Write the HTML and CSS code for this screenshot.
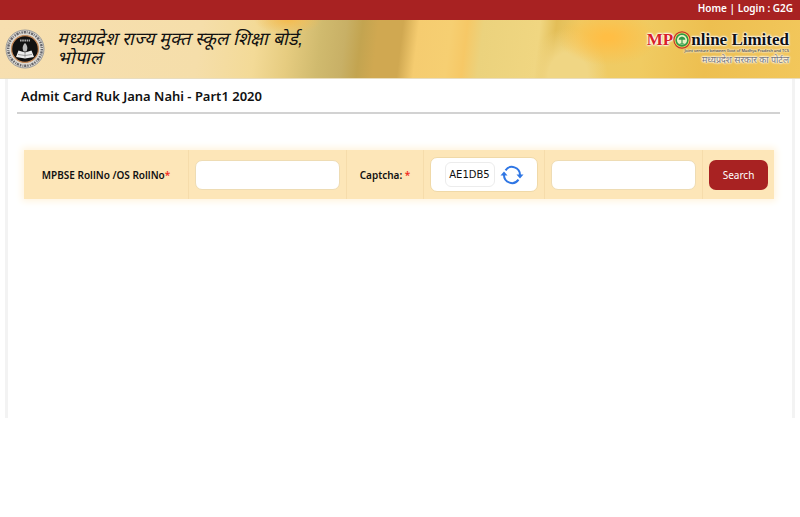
FILE: index.html
```html
<!DOCTYPE html>
<html lang="en">
<head>
    <meta charset="UTF-8">
    <meta name="viewport" content="width=device-width, initial-scale=1">
    <title>Admit Card Ruk Jana Nahi</title>
    <link rel="stylesheet" href="styles.css">
</head>
<body>
    <nav class="top-bar">
        <a href="#">Home</a> | <a href="#">Login : G2G</a>
    </nav>
    <header class="banner">
        <svg class="board-logo" viewBox="0 0 40 40" aria-hidden="true">
            <circle cx="20" cy="20" r="19" fill="#dcd9d2" stroke="#999" stroke-width="1"/>
            <circle cx="20" cy="20" r="16.8" fill="none" stroke="#66666c" stroke-width="2.4" stroke-dasharray="1.4 1 2.2 .9 .8 1.2"/>
            <circle cx="20" cy="20" r="13.4" fill="#111" stroke="#c78a58" stroke-width="1.2"/>
            <path d="M15 11.500h10" stroke="#aaa" stroke-width="1.800" stroke-dasharray="1.6 .6"/>
            <path d="M20 14c3 3 2.600 6 1.500 8.500h-3c-1.100-2.500-1.500-5.500 1.500-8.500z" fill="#bbb"/>
            <path d="M11 28l2.500-6.500 6.500 2 6.500-2 2.500 6.500-9 1.500z" fill="#eee"/>
            <path d="M13 25.500l7 1 7-1M20 23.500v5" fill="none" stroke="#888" stroke-width=".8"/>
        </svg>
        <h1 class="board-name" lang="hi">मध्यप्रदेश राज्य मुक्त स्कूल शिक्षा बोर्ड, भोपाल</h1>
        <div class="portal">
            <div class="portal-name">
                <span class="mp">MP</span>
                <svg class="portal-icon" viewBox="0 0 16 16" aria-hidden="true">
                    <circle cx="8" cy="8" r="7.2" fill="#f6d95c" stroke="#c4342c" stroke-width="1"/>
                    <circle cx="8" cy="8" r="5.200" fill="#e9f3c4" stroke="#2f9a48" stroke-width="1.400"/>
                    <path d="M8 5v6.500M6 11.500h4" stroke="#2f9a48" stroke-width="1"/>
                    <path d="M5 7.800c0-3.600 6-3.600 6 0z" fill="#2f9a48"/>
                </svg>
                <span>nline Limited</span>
            </div>
            <div class="portal-note">Joint venture between Govt of Madhya Pradesh and TCS</div>
            <div class="portal-hindi" lang="hi">मध्यप्रदेश सरकार का पोर्टल</div>
        </div>
    </header>
    <main class="content">
        <h2 class="page-title">Admit Card Ruk Jana Nahi - Part1 2020</h2>
        <form class="search-form">
            <div class="cell label-cell">
                <label for="rollNo">MPBSE RollNo /OS RollNo<span class="required">*</span></label>
            </div>
            <div class="cell">
                <input type="text" id="rollNo" name="rollNo">
            </div>
            <div class="cell label-cell">
                <label for="captcha">Captcha: <span class="required">*</span></label>
            </div>
            <div class="cell">
                <div class="captcha-box">
                    <span class="captcha-code">AE1DB5</span>
                    <button type="button" class="refresh" aria-label="Refresh captcha">
                        <svg viewBox="0 0 24 20" aria-hidden="true">
                            <g fill="none" stroke="#2f76e4" stroke-width="2">
                                <path d="M5.500 5.300A8 8 0 0 1 20 10"/>
                                <path d="M18.500 14.700A8 8 0 0 1 4 10"/>
                            </g>
                            <path d="M16.500 9.500h7l-3.500 4zM.5 10.500h7L4 6.500z" fill="#2f76e4"/>
                        </svg>
                    </button>
                </div>
            </div>
            <div class="cell">
                <input type="text" id="captcha" name="captcha">
            </div>
            <div class="cell">
                <button type="submit" class="search-button">Search</button>
            </div>
        </form>
    </main>
</body>
</html>
```

FILE: styles.css
```css
* {
    box-sizing: border-box;
}
body {
    margin: 0;
    background-color: #fff;
    color: #111;
    font-family: "Noto Sans", sans-serif;
}
.top-bar {
    height: 20px;
    padding-right: 7px;
    background-color: #a82222;
    color: #fff;
    font-size: 10px;
    font-weight: 600;
    line-height: 16px;
    text-align: right;
}
.top-bar a {
    color: #fff;
    text-decoration: none;
}
.banner {
    display: flex;
    align-items: center;
    height: 59px;
    padding: 0 11px 0 5px;
    border-bottom: 1px solid #e8ddc0;
    background:
        radial-gradient(ellipse 50px 28px at 76% 30%, #ffbe45 10%, transparent),
        radial-gradient(ellipse 40px 50px at 71% 100%, #f0d684 50%, transparent),
        radial-gradient(ellipse 34px 14px at 36% 0, #f3bd55 10%, transparent),
        linear-gradient(97deg, #f7dfb0 0, #f5deaa 25%, #f3da97 32%, #e6cc80 36%, #d0ba6e 40%, #c8b066 43%, #c3a450 45%, #d0a851 47%, #d0a851 50%, #f5cc70 52%, #f6cf72 56%, #f6c866 58%, #ebd27d 60%, #f0d681 67%, #e3be58 69%, #eecb66 72%, #f0cb62 80%, #edbf50 88%, #f2c75b 100%);
}
.board-logo {
    flex: none;
    width: 40px;
    height: 40px;
}
.board-name {
    width: 270px;
    margin: 0 auto 0 12px;
    font-family: sans-serif;
    font-size: 18px;
    font-style: italic;
    font-weight: 500;
    line-height: 19px;
}
.portal {
    text-align: right;
    text-shadow: 0 0 2px #fff, 0 0 2px #fff, 0 0 2px #fff, 0 0 3px #fff;
}
.portal-name {
    display: flex;
    align-items: center;
    font-family: "Liberation Serif", serif;
    font-size: 17px;
    font-weight: bold;
    line-height: 16px;
}
.mp {
    color: #d81f2a;
}
.portal-icon {
    width: 18px;
    height: 18px;
}
.portal-note {
    font-size: 4px;
    line-height: 4px;
}
.portal-hindi {
    color: #77767c;
    font-size: 9px;
    line-height: 14px;
}
.content {
    min-height: 339px;
    margin: 0 5px;
    padding: 8px 12px;
    border: solid #f3f3f3;
    border-width: 0 3px;
}
.page-title {
    margin: 0 0 36px -3px;
    padding: 0 0 7px 4px;
    border-bottom: 2px solid #d2d2d2;
    font-size: 13px;
    font-weight: 600;
    line-height: 18px;
}
.search-form {
    display: grid;
    grid-template-columns: 165fr 158fr 77fr 121fr 158fr 71fr;
    margin: 0 6px 0 4px;
    background-color: #fde6b8;
    box-shadow: 0 0 7px 2px #fff3dc;
}
.cell {
    display: flex;
    align-items: center;
    min-width: 0;
    height: 49px;
    padding: 0 6px;
    border-right: 1px solid #f6dcab;
}
.cell:last-child {
    border-right: none;
}
.label-cell {
    justify-content: center;
    font-size: 10px;
    font-weight: 600;
    white-space: nowrap;
}
.required {
    color: #f22c1e;
}
.cell input {
    width: 100%;
    height: 30px;
    padding: 0 8px;
    border: 1px solid #eedcb4;
    border-radius: 7px;
    background-color: #fff;
    font-size: 12px;
}
.captcha-box {
    display: flex;
    align-items: center;
    justify-content: center;
    gap: 5px;
    width: 100%;
    height: 35px;
    border: 1px solid #f0d9a8;
    border-radius: 7px;
    background-color: #fff;
}
.captcha-code {
    width: 50px;
    border: 1px solid #ececec;
    border-radius: 6px;
    font-family: "DejaVu Sans", sans-serif;
    font-size: 10px;
    line-height: 23px;
    text-align: center;
}
.refresh {
    width: 24px;
    height: 20px;
    padding: 0;
    border: none;
    background: none;
    cursor: pointer;
}
.refresh svg {
    display: block;
}
.search-button {
    width: 100%;
    height: 30px;
    padding: 0;
    border: none;
    border-radius: 7px;
    background-color: #a82222;
    color: #fff;
    font-family: "Noto Sans", sans-serif;
    font-size: 10px;
    cursor: pointer;
}
```
